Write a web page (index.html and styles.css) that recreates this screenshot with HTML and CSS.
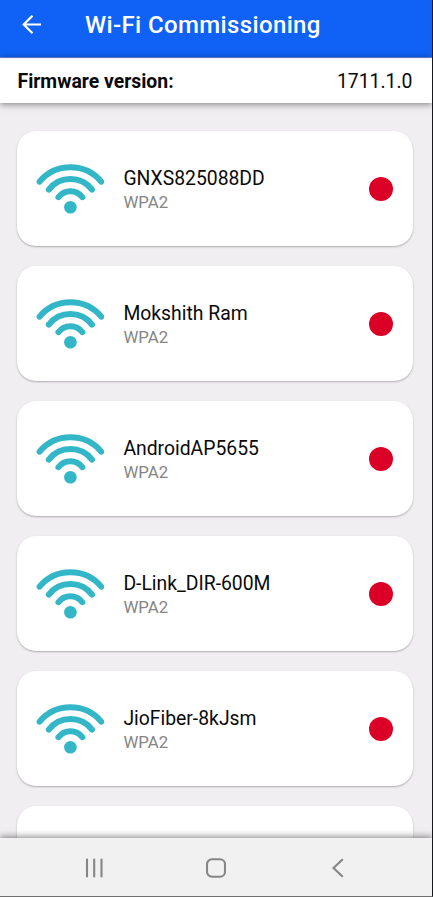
FILE: index.html
```
<!DOCTYPE html>
<html lang="en">
<head>
<meta charset="utf-8">
<title>Wi-Fi Commissioning</title>
<link rel="stylesheet" href="styles.css">
</head>
<body>
<svg class="defs" aria-hidden="true">
  <symbol id="wifi" viewBox="0 0 68 50">
    <g fill="none" stroke="currentColor" stroke-width="6" stroke-linecap="round">
      <path d="M3.6 17.6A40.4 40.4 0 0 1 65.2 17.6"/>
      <path d="M12.8 25.6A27.4 27.4 0 0 1 56 25.6"/>
      <path d="M22.4 33.2A14.9 14.9 0 0 1 46.4 33.2"/>
    </g>
    <circle cx="34.4" cy="43.2" r="6.3" fill="currentColor"/>
  </symbol>
</svg>
<div class="screen">
  <header class="appbar">
    <svg class="back" viewBox="0 0 20 20"><path d="M19 9.5H2M10.5 .7L1.7 9.5L10.5 18.3"/></svg>
    <h1 class="title">Wi-Fi Commissioning</h1>
  </header>
  <div class="firmware">
    <span class="label">Firmware version:</span>
    <span class="version">1711.1.0</span>
  </div>
  <main class="networks">
    <div class="card"><svg class="wifi"><use href="#wifi"/></svg><div class="info"><div class="name">GNXS825088DD</div><div class="security">WPA2</div></div><span class="status"></span></div>
    <div class="card"><svg class="wifi"><use href="#wifi"/></svg><div class="info"><div class="name">Mokshith Ram</div><div class="security">WPA2</div></div><span class="status"></span></div>
    <div class="card"><svg class="wifi"><use href="#wifi"/></svg><div class="info"><div class="name">AndroidAP5655</div><div class="security">WPA2</div></div><span class="status"></span></div>
    <div class="card"><svg class="wifi"><use href="#wifi"/></svg><div class="info"><div class="name">D-Link_DIR-600M</div><div class="security">WPA2</div></div><span class="status"></span></div>
    <div class="card"><svg class="wifi"><use href="#wifi"/></svg><div class="info"><div class="name">JioFiber-8kJsm</div><div class="security">WPA2</div></div><span class="status"></span></div>
    <div class="card"></div>
  </main>
  <nav class="navbar">
    <svg viewBox="0 0 20 20"><path d="M2 1.5V18.5M9.2 1.5V18.5M16.5 1.5V18.5"/></svg>
    <svg viewBox="0 0 20 20"><rect x="1" y="1.2" width="18" height="17.6" rx="5"/></svg>
    <svg viewBox="0 0 20 20"><path d="M14.2 1.8L5.5 10L14.2 18.2"/></svg>
  </nav>
</div>
</body>
</html>
```
FILE: styles.css
```
* { box-sizing: border-box; }
body { margin: 0; font-family: Roboto, sans-serif; color: #0a0a0a; }
.defs { position: absolute; width: 0; height: 0; }
.screen {
  width: 433px; height: 897px; overflow: hidden;
  display: flex; flex-direction: column;
  background: #f0eef0;
  border-right: 1px solid #15181c; border-bottom: 1px solid #707070;
}
.appbar {
  flex: none; height: 58px; padding: 0 22px 8px;
  display: flex; align-items: center;
  background: #0f62f5; border-bottom: 1px solid #5f92ee;
}
.back { width: 20px; height: 20px; margin-right: 43px; fill: none; stroke: #fff; stroke-width: 2.2; }
.title { margin: 0; font-size: 24px; line-height: 28px; font-weight: 500; color: #fff; letter-spacing: .37px; white-space: nowrap; }
.firmware {
  flex: none; height: 45px; padding: 1px 19.5px 0 17.5px;
  display: flex; align-items: center; justify-content: space-between;
  background: linear-gradient(#f4f4f6, #fff 4px);
  font-size: 19.4px;
  box-shadow: 0 1px 7px rgba(0,0,0,.5); z-index: 1;
}
.label { font-weight: 700; }
.networks {
  flex: 1; min-height: 0; overflow: hidden; padding: 28px 19.5px 0 17px;
  display: flex; flex-direction: column; gap: 20px;
}
.card {
  flex: none; height: 115px; padding: 0 19.5px 0 19px;
  display: flex; align-items: center;
  background: #fff; border-radius: 19px;
  box-shadow: 0 1px 2px rgba(0,0,0,.28);
}
.wifi { width: 68px; height: 50px; margin-right: 19.4px; color: #33b7c8; }
.info { flex: 1; }
.name { padding-top: 1px; font-size: 19.35px; line-height: 26px; }
.security { font-size: 16.8px; line-height: 21px; color: #858585; }
.status { width: 24px; height: 24px; border-radius: 50%; background: #db0026; }
.navbar {
  flex: none; height: 58px; padding: 2px 33px 0 34px;
  display: flex; align-items: center; justify-content: space-around;
  background: #f1f1f1; box-shadow: 0 -1px 7px rgba(0,0,0,.5); z-index: 1;
}
.navbar svg { width: 20px; height: 20px; fill: none; stroke: #868686; stroke-width: 2.1; stroke-linecap: round; }
```
